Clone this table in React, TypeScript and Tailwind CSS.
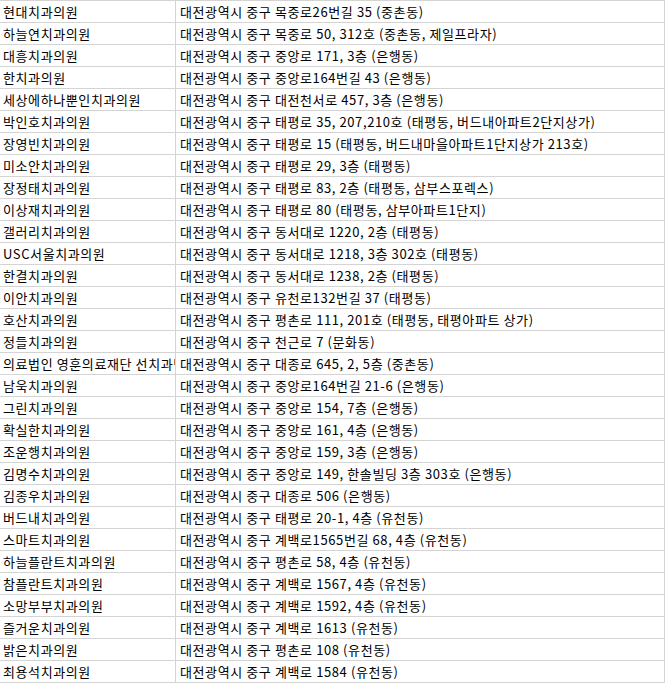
import React from 'react';

const ROWS: [string, string][] = [
  ['현대치과의원', '대전광역시 중구 목중로26번길 35 (중촌동)'],
  ['하늘연치과의원', '대전광역시 중구 목중로 50, 312호 (중촌동, 제일프라자)'],
  ['대흥치과의원', '대전광역시 중구 중앙로 171, 3층 (은행동)'],
  ['한치과의원', '대전광역시 중구 중앙로164번길 43 (은행동)'],
  ['세상에하나뿐인치과의원', '대전광역시 중구 대전천서로 457, 3층 (은행동)'],
  ['박인호치과의원', '대전광역시 중구 태평로 35, 207,210호 (태평동, 버드내아파트2단지상가)'],
  ['장영빈치과의원', '대전광역시 중구 태평로 15 (태평동, 버드내마을아파트1단지상가 213호)'],
  ['미소안치과의원', '대전광역시 중구 태평로 29, 3층 (태평동)'],
  ['장정태치과의원', '대전광역시 중구 태평로 83, 2층 (태평동, 삼부스포렉스)'],
  ['이상재치과의원', '대전광역시 중구 태평로 80 (태평동, 삼부아파트1단지)'],
  ['갤러리치과의원', '대전광역시 중구 동서대로 1220, 2층 (태평동)'],
  ['USC서울치과의원', '대전광역시 중구 동서대로 1218, 3층 302호 (태평동)'],
  ['한결치과의원', '대전광역시 중구 동서대로 1238, 2층 (태평동)'],
  ['이안치과의원', '대전광역시 중구 유천로132번길 37 (태평동)'],
  ['호산치과의원', '대전광역시 중구 평촌로 111, 201호 (태평동, 태평아파트 상가)'],
  ['정들치과의원', '대전광역시 중구 천근로 7 (문화동)'],
  ['의료법인 영훈의료재단 선치과병원', '대전광역시 중구 대종로 645, 2, 5층 (중촌동)'],
  ['남욱치과의원', '대전광역시 중구 중앙로164번길 21-6 (은행동)'],
  ['그린치과의원', '대전광역시 중구 중앙로 154, 7층 (은행동)'],
  ['확실한치과의원', '대전광역시 중구 중앙로 161, 4층 (은행동)'],
  ['조운행치과의원', '대전광역시 중구 중앙로 159, 3층 (은행동)'],
  ['김명수치과의원', '대전광역시 중구 중앙로 149, 한솔빌딩 3층 303호 (은행동)'],
  ['김종우치과의원', '대전광역시 중구 대종로 506 (은행동)'],
  ['버드내치과의원', '대전광역시 중구 태평로 20-1, 4층 (유천동)'],
  ['스마트치과의원', '대전광역시 중구 계백로1565번길 68, 4층 (유천동)'],
  ['하늘플란트치과의원', '대전광역시 중구 평촌로 58, 4층 (유천동)'],
  ['참플란트치과의원', '대전광역시 중구 계백로 1567, 4층 (유천동)'],
  ['소망부부치과의원', '대전광역시 중구 계백로 1592, 4층 (유천동)'],
  ['즐거운치과의원', '대전광역시 중구 계백로 1613 (유천동)'],
  ['밝은치과의원', '대전광역시 중구 평촌로 108 (유천동)'],
  ['최용석치과의원', '대전광역시 중구 계백로 1584 (유천동)'],
];

export default function App() {
  return (
    <div className="w-[665px] bg-white text-black font-['Noto_Sans_CJK_KR',sans-serif] text-[13px] tracking-[0.6px] leading-none">
      <div className="border-t border-r border-[#d4d4d4]">
        {ROWS.map(([name, addr], i) => (
          <div key={i} className="flex h-[22px] border-b border-[#d4d4d4]">
            <div className="w-[175px] shrink-0 overflow-hidden whitespace-nowrap pl-[3px] flex items-center">
              {name}
            </div>
            <div className="flex-1 border-l border-[#d4d4d4] overflow-hidden whitespace-nowrap pl-[4px] flex items-center">
              {addr}
            </div>
          </div>
        ))}
      </div>
    </div>
  );
}
